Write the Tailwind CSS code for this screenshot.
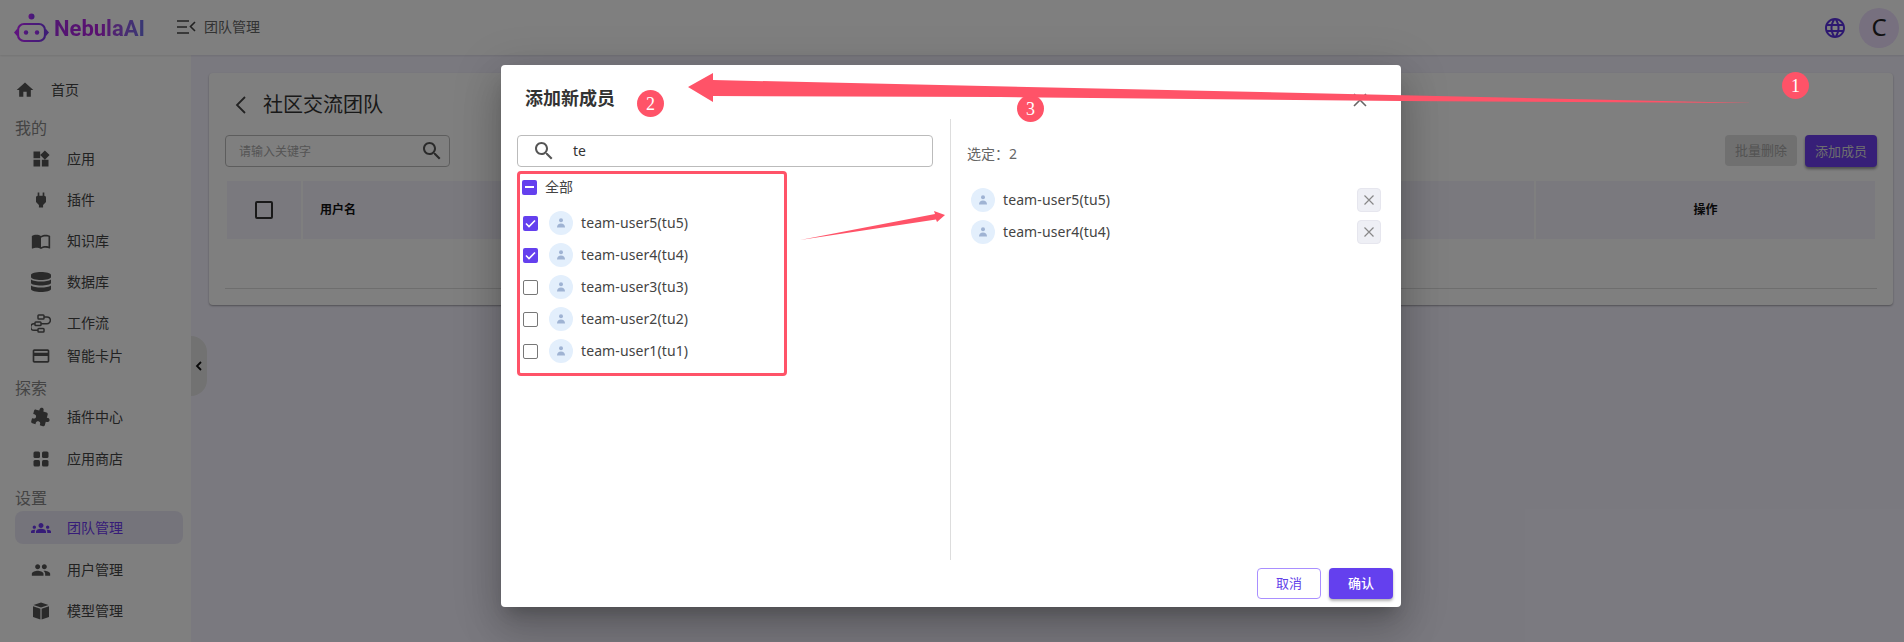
<!DOCTYPE html>
<html lang="zh-CN">
<head>
  <meta charset="UTF-8" />
  <title>团队管理</title>
  <script src="https://cdn.jsdelivr.net/npm/@tailwindcss/browser@4"></script>
</head>
<body class="h-[642px] overflow-hidden relative bg-[#f5f3ff] text-[#444] text-sm font-['Noto_Sans','Noto_Sans_CJK_SC',sans-serif]">

  <!-- page behind the dialog -->
  <header class="h-[55px] bg-white shadow-[0_1px_2px_rgba(0,0,0,0.1)] relative z-10 flex items-center">
    <div class="w-[177px] pl-[14px] flex items-center gap-[5px]">
      <svg class="w-[35px] h-[30px] mt-[1px] shrink-0" viewBox="0 0 35 30" fill="none">
        <defs><linearGradient id="logo" x1="0" x2="1" y1="0" y2="0"><stop offset="0" stop-color="#c026ff"/><stop offset="1" stop-color="#7c3aed"/></linearGradient></defs>
        <circle cx="17.5" cy="3.5" r="3" fill="url(#logo)"/>
        <path d="M17.5 6v5" stroke="url(#logo)" stroke-width="2"/>
        <rect x="4" y="11" width="27" height="17" rx="6" stroke="url(#logo)" stroke-width="2.2"/>
        <circle cx="12" cy="19.5" r="2.2" fill="url(#logo)"/>
        <circle cx="23" cy="19.5" r="2.2" fill="url(#logo)"/>
        <path d="M3 16l-3 3.5 3 3.5zM32 16l3 3.5-3 3.5z" fill="url(#logo)"/>
      </svg>
      <span class="text-[22px] leading-none font-bold mt-[2px] bg-gradient-to-r from-[#a62ce6] via-[#b41ee0] to-[#6d72e8] bg-clip-text text-transparent font-['Roboto',sans-serif]">NebulaAI</span>
    </div>
    <svg class="w-[19px] h-[14px] -mt-[2px]" viewBox="0 0 19 14" fill="none" stroke="#444" stroke-width="1.6"><path d="M0 1h12M0 7h10M0 13h12M18 2l-4.5 4.5L18 11"/></svg>
    <span class="ml-[8px] -mt-[1px] text-[#666]">团队管理</span>
    <svg class="w-6 h-6 ml-auto text-[#5a30e0]" viewBox="0 0 24 24" fill="currentColor"><path d="M11.99 2C6.47 2 2 6.48 2 12s4.47 10 9.99 10C17.52 22 22 17.52 22 12S17.52 2 11.99 2zm6.93 6h-2.95c-.32-1.25-.78-2.45-1.38-3.56 1.84.63 3.37 1.91 4.33 3.56zM12 4.04c.83 1.2 1.48 2.53 1.91 3.96h-3.82c.43-1.43 1.08-2.76 1.91-3.96zM4.26 14C4.1 13.36 4 12.69 4 12s.1-1.36.26-2h3.38c-.08.66-.14 1.32-.14 2 0 .68.06 1.34.14 2H4.26zm.82 2h2.95c.32 1.25.78 2.45 1.38 3.56-1.84-.63-3.37-1.9-4.33-3.56zm2.95-8H5.08c.96-1.66 2.49-2.93 4.33-3.56C8.81 5.55 8.35 6.75 8.03 8zM12 19.96c-.83-1.2-1.48-2.53-1.91-3.96h3.82c-.43 1.43-1.08 2.76-1.91 3.96zM14.34 14H9.66c-.09-.66-.16-1.32-.16-2 0-.68.07-1.35.16-2h4.68c.09.65.16 1.32.16 2 0 .68-.07 1.34-.16 2zm.25 5.56c.6-1.11 1.06-2.31 1.38-3.56h2.95c-.96 1.65-2.49 2.93-4.33 3.56zM16.36 14c.08-.66.14-1.32.14-2 0-.68-.06-1.34-.14-2h3.38c.16.64.26 1.31.26 2s-.1 1.36-.26 2h-3.38z"/></svg>
    <div class="w-10 h-10 ml-[12px] mr-[5px] rounded-full bg-[#eee0ff] flex items-center justify-center text-[24px] text-[#222]">C</div>
  </header>

  <div class="flex h-[587px]">
    <!-- sidebar -->
    <aside class="w-[191px] shrink-0 bg-white pt-[14px] relative">
      <a class="flex items-center h-[41px] pl-[15px] gap-[16px]">
        <svg class="w-5 h-5 fill-[#555]" viewBox="0 0 24 24"><path d="M10 20v-6h4v6h5v-8h3L12 3 2 12h3v8z"/></svg>
        <span>首页</span>
      </a>
      <p class="h-[24px] mt-[6px] pl-[15px] text-base leading-[24px] text-[#888]">我的</p>
      <a class="flex items-center h-[41px] pl-[31px] gap-[16px] -mt-[2px]">
        <svg class="w-5 h-5 fill-[#555]" viewBox="0 0 24 24"><path d="M13 13v8h8v-8h-8zM3 21h8v-8H3v8zM3 3v8h8V3H3zm13.66-1.31L11 7.34 16.66 13l5.66-5.66-5.66-5.65z"/></svg>
        <span>应用</span>
      </a>
      <a class="flex items-center h-[41px] pl-[31px] gap-[16px]">
        <svg class="w-5 h-5 fill-[#555]" viewBox="0 0 24 24"><path d="M16 7V3h-2v4h-4V3H8v4h-.01C6.9 7 6 7.9 6 8.99v5.49L9.5 18v3h5v-3l3.5-3.51v-5.5c0-1.1-.9-1.99-2-1.99z"/></svg>
        <span>插件</span>
      </a>
      <a class="flex items-center h-[41px] pl-[31px] gap-[16px]">
        <svg class="w-5 h-5 fill-[#555]" viewBox="0 0 24 24"><path d="M21 5c-1.11-.35-2.33-.5-3.5-.5-1.95 0-4.05.4-5.5 1.5-1.45-1.1-3.55-1.5-5.5-1.5S2.45 4.9 1 6v14.65c0 .25.25.5.5.5.1 0 .15-.05.25-.05C3.1 20.45 5.05 20 6.5 20c1.95 0 4.05.4 5.5 1.5 1.35-.85 3.8-1.5 5.5-1.5 1.65 0 3.35.3 4.75 1.05.1.05.15.05.25.05.25 0 .5-.25.5-.5V6c-.6-.45-1.25-.75-2-1zm0 13.5c-1.1-.35-2.3-.5-3.5-.5-1.7 0-4.15.65-5.5 1.5V8c1.35-.85 3.8-1.5 5.5-1.5 1.2 0 2.4.15 3.5.5v11.5z"/></svg>
        <span>知识库</span>
      </a>
      <a class="flex items-center h-[41px] pl-[31px] gap-[16px]">
        <svg class="w-5 h-5 fill-[#555]" viewBox="0 0 20 20"><path d="M10 0c5 0 10 1 10 3v2c0 2-5 3-10 3S0 7 0 5V3c0-2 5-3 10-3zM0 7.5C2 9 6 9.6 10 9.6S18 9 20 7.5V11c0 1.5-5 2.5-10 2.5S0 12.5 0 11zM0 13.5c2 1.5 6 2.1 10 2.1s8-.6 10-2.100V17c0 2-5 3-10 3S0 19 0 17z"/></svg>
        <span>数据库</span>
      </a>
      <a class="flex items-center h-[41px] pl-[31px] gap-[16px]">
        <svg class="w-5 h-5" viewBox="0 0 20 20" fill="none" stroke="#555" stroke-width="1.5"><rect x="7" y="2" width="6" height="4" rx=".8"/><rect x="4" y="9" width="6" height="3.5" rx=".8"/><rect x="7" y="15.5" width="6" height="3.5" rx=".8"/><path d="M13 4h3a2.700 2.700 0 0 1 0 6.700h-6M4 10.700H3a3.300 3.300 0 0 0 0 6.600h4"/></svg>
        <span>工作流</span>
      </a>
      <a class="flex items-center h-[27px] pl-[31px] gap-[16px] -mt-[1px] mb-[3px]">
        <svg class="w-5 h-5 fill-[#555]" viewBox="0 0 24 24"><path d="M20 4H4c-1.110 0-1.990.89-1.990 2L2 18c0 1.110.89 2 2 2h16c1.110 0 2-.89 2-2V6c0-1.110-.89-2-2-2zm0 14H4v-6h16v6zm0-10H4V6h16v2z"/></svg>
        <span>智能卡片</span>
      </a>
      <p class="h-[24px] mt-[7px] pl-[15px] text-base leading-[24px] text-[#888]">探索</p>
      <a class="flex items-center h-[41px] pl-[31px] gap-[16px] -mt-[4px] mb-[1px]">
        <svg class="w-5 h-5 fill-[#555] rotate-[15deg]" viewBox="0 0 24 24"><path d="M20.5 11H19V7c0-1.100-.9-2-2-2h-4V3.5C13 2.120 11.880 1 10.500 1S8 2.120 8 3.5V5H4c-1.100 0-1.990.9-1.990 2v3.800H3.500c1.490 0 2.700 1.210 2.700 2.700s-1.210 2.700-2.700 2.700H2V20c0 1.100.9 2 2 2h3.800v-1.500c0-1.490 1.210-2.700 2.700-2.700 1.490 0 2.700 1.210 2.700 2.700V22H17c1.100 0 2-.9 2-2v-4h1.500c1.380 0 2.500-1.120 2.500-2.500S21.880 11 20.500 11z"/></svg>
        <span>插件中心</span>
      </a>
      <a class="flex items-center h-[41px] pl-[31px] gap-[16px]">
        <svg class="w-5 h-5 fill-[#555]" viewBox="0 0 20 20"><rect x="2.500" y="2.500" width="6.500" height="6.500" rx="1.500"/><rect x="11" y="2.500" width="6.500" height="6.500" rx="1.500"/><rect x="2.500" y="11" width="6.500" height="6.500" rx="1.500"/><rect x="11" y="11" width="6.500" height="6.500" rx="1.500"/></svg>
        <span>应用商店</span>
      </a>
      <p class="h-[24px] pl-[15px] text-base leading-[24px] text-[#888] mt-[7px]">设置</p>
      <a class="flex items-center h-[33px] ml-[15px] mr-[8px] pl-[16px] gap-[16px] rounded-lg bg-[#ebe9f6] text-[#6d38f0] mt-[1px] mb-[5px]">
        <svg class="w-5 h-5 fill-[#6d38f0]" viewBox="0 0 24 24"><path d="M12 12.750c1.630 0 3.070.39 4.240.9 1.080.48 1.760 1.560 1.760 2.730V18H6v-1.610c0-1.180.68-2.260 1.760-2.730 1.170-.52 2.610-.91 4.240-.91zM4 13c1.100 0 2-.9 2-2s-.9-2-2-2-2 .9-2 2 .9 2 2 2zm1.130 1.100c-.37-.06-.74-.1-1.130-.1-.99 0-1.930.21-2.780.58C.48 14.900 0 15.620 0 16.430V18h4.500v-1.610c0-.83.23-1.610.63-2.290zM20 13c1.100 0 2-.9 2-2s-.9-2-2-2-2 .9-2 2 .9 2 2 2zm4 3.430c0-.81-.48-1.530-1.220-1.850-.85-.37-1.790-.58-2.780-.58-.39 0-.76.04-1.130.1.4.68.63 1.460.63 2.290V18H24v-1.570zM12 6c1.660 0 3 1.340 3 3s-1.340 3-3 3-3-1.340-3-3 1.340-3 3-3z"/></svg>
        <span>团队管理</span>
      </a>
      <a class="flex items-center h-[41px] pl-[31px] gap-[16px]">
        <svg class="w-5 h-5 fill-[#555]" viewBox="0 0 24 24"><path d="M16 11c1.660 0 2.990-1.340 2.990-3S17.660 5 16 5c-1.660 0-3 1.340-3 3s1.340 3 3 3zm-8 0c1.660 0 2.990-1.340 2.990-3S9.660 5 8 5C6.340 5 5 6.340 5 8s1.340 3 3 3zm0 2c-2.330 0-7 1.170-7 3.500V19h14v-2.500c0-2.330-4.670-3.500-7-3.500zm8 0c-.29 0-.62.02-.97.05 1.160.84 1.970 1.970 1.970 3.450V19h6v-2.500c0-2.330-4.670-3.500-7-3.500z"/></svg>
        <span>用户管理</span>
      </a>
      <a class="flex items-center h-[41px] pl-[31px] gap-[16px]">
        <svg class="w-5 h-5 fill-[#555]" viewBox="0 0 20 20"><path d="M10 1.500l7.500 2.600-7.500 2.500-7.500-2.500zM2 5.200l7.400 2.500V18.500L2 16zM18 5.200l-7.400 2.500V18.500L18 16z"/></svg>
        <span>模型管理</span>
      </a>
      <div class="absolute left-full top-[281px] w-4 h-[60px] rounded-r-[16px] bg-[#e4e4e4] flex items-center justify-center">
        <svg class="w-3 h-3" viewBox="0 0 12 12" fill="none" stroke="#111" stroke-width="1.800"><path d="M8 2L4 6l4 4"/></svg>
      </div>
    </aside>

    <!-- team card -->
    <main class="flex-1 pt-[18px] pl-[18px] pr-[11px]">
      <section class="h-[232px] bg-white rounded shadow-[0_1px_2px_rgba(0,0,0,0.35)] px-4">
        <div class="flex items-center h-[62px] pt-[2px] pl-[10px]">
          <svg class="w-[11px] h-[18px]" viewBox="0 0 11 18" fill="none" stroke="#444" stroke-width="1.800"><path d="M10 1L2 9l8 8"/></svg>
          <h1 class="ml-[17px] text-[20px] text-[#333]">社区交流团队</h1>
        </div>
        <div class="flex items-start">
          <div class="w-[225px] h-[32px] border border-[#bbb] rounded flex items-center pl-[13px] pr-[5px]">
            <span class="text-xs text-[#aaa] mt-[1px]">请输入关键字</span>
            <svg class="w-6 h-6 ml-auto fill-[#555]" viewBox="0 0 24 24"><path d="M15.500 14h-.79l-.28-.27C15.410 12.590 16 11.110 16 9.500 16 5.910 13.090 3 9.500 3S3 5.910 3 9.500 5.910 16 9.500 16c1.610 0 3.090-.59 4.230-1.570l.27.28v.79l5 4.990L20.490 19l-4.990-5zm-6 0C7.010 14 5 11.990 5 9.500S7.010 5 9.500 5 14 7.010 14 9.500 11.990 14 9.500 14z"/></svg>
          </div>
          <button class="ml-auto w-[72px] h-[31px] rounded bg-[#e0e0e0] text-[#a6a6a6] text-[13px]">批量删除</button>
          <button class="ml-[8px] w-[72px] h-[32px] rounded bg-[#6e3ff0] text-[#ddd] text-[13px] shadow-[0_2px_3px_rgba(0,0,0,0.4)]">添加成员</button>
        </div>
        <div class="mt-[14px] ml-[2px] mr-[2px] flex gap-[2px] h-[58px] text-xs font-bold text-[#111]">
          <div class="w-[74px] bg-[#f4f2fd] flex items-center justify-center">
            <span class="w-[18px] h-[18px] border-2 border-[#333] rounded-[2px]"></span>
          </div>
          <div class="flex-1 bg-[#f4f2fd] flex items-center pl-[17px]">用户名</div>
          <div class="w-[339px] bg-[#f4f2fd] flex items-center justify-center">操作</div>
        </div>
        <div class="mt-[49px] h-px bg-[#ddd]"></div>
      </section>
    </main>
  </div>

  <!-- dim layer -->
  <div class="absolute inset-0 bg-black/50 z-20"></div>

  <!-- dialog -->
  <div class="absolute z-30 left-[501px] top-[65px] w-[900px] h-[542px] bg-white rounded shadow-[0_11px_15px_-7px_rgba(0,0,0,0.2),0_24px_38px_3px_rgba(0,0,0,0.14),0_9px_46px_8px_rgba(0,0,0,0.12)] flex flex-col">
    <div class="flex items-center h-[54px] pl-[24px] pr-[34px]">
      <h2 class="text-lg font-bold text-[#333] mt-[12px]">添加新成员</h2>
      <svg class="w-[14px] h-[14px] ml-auto mt-[16px]" viewBox="0 0 14 14" fill="none" stroke="#666" stroke-width="1.600"><path d="M1 1l12 12M13 1L1 13"/></svg>
    </div>
    <div class="flex h-[441px]">
      <div class="w-[449px] pl-[16px] pr-[17px]">
        <div class="h-[32px] mt-[16px] border border-[#bbb] rounded flex items-center pl-[14px] text-[#333]">
          <svg class="w-6 h-6 fill-[#555]" viewBox="0 0 24 24"><path d="M15.500 14h-.79l-.28-.27C15.410 12.590 16 11.110 16 9.500 16 5.910 13.090 3 9.500 3S3 5.910 3 9.500 5.910 16 9.500 16c1.610 0 3.090-.59 4.230-1.570l.27.28v.79l5 4.990L20.490 19l-4.990-5zm-6 0C7.010 14 5 11.990 5 9.500S7.010 5 9.500 5 14 7.010 14 9.500 11.990 14 9.500 14z"/></svg>
          <span class="ml-[17px]">te</span>
        </div>
        <div class="mt-[4px] w-[270px] h-[205px] border-[3px] border-[#ff5368] rounded px-[2px]">
          <div class="flex items-center h-[26px] text-[#444]">
            <span class="w-[15px] h-[15px] rounded-[2px] bg-[#6440ee] flex items-center justify-center"><span class="w-[9px] h-[2px] bg-white"></span></span>
            <span class="ml-[8px]">全部</span>
          </div>
          <ul class="mt-[7px] pl-[1px] text-[#444] tracking-[0.1px]">
            <li class="flex items-center h-[32px]">
              <span class="w-[15px] h-[15px] rounded-[2px] bg-[#6440ee] flex items-center justify-center"><svg class="w-[11px] h-[11px]" viewBox="0 0 11 11" fill="none" stroke="white" stroke-width="1.600"><path d="M1 5.500l3 3 6-6"/></svg></span>
              <span class="ml-[11px] w-6 h-6 rounded-full bg-[#e3effc] flex items-center justify-center"><svg class="w-3 h-3 fill-[#9fb3d3]" viewBox="0 0 12 12"><circle cx="6" cy="3.200" r="2"/><path d="M2 10.500c0-2.600 1.700-4 4-4s4 1.400 4 4z"/></svg></span>
              <span class="ml-2">team-user5(tu5)</span>
            </li>
            <li class="flex items-center h-[32px]">
              <span class="w-[15px] h-[15px] rounded-[2px] bg-[#6440ee] flex items-center justify-center"><svg class="w-[11px] h-[11px]" viewBox="0 0 11 11" fill="none" stroke="white" stroke-width="1.600"><path d="M1 5.500l3 3 6-6"/></svg></span>
              <span class="ml-[11px] w-6 h-6 rounded-full bg-[#e3effc] flex items-center justify-center"><svg class="w-3 h-3 fill-[#9fb3d3]" viewBox="0 0 12 12"><circle cx="6" cy="3.200" r="2"/><path d="M2 10.500c0-2.600 1.700-4 4-4s4 1.400 4 4z"/></svg></span>
              <span class="ml-2">team-user4(tu4)</span>
            </li>
            <li class="flex items-center h-[32px]">
              <span class="w-[15px] h-[15px] rounded-[2px] border-[1.500px] border-[#777]"></span>
              <span class="ml-[11px] w-6 h-6 rounded-full bg-[#e3effc] flex items-center justify-center"><svg class="w-3 h-3 fill-[#9fb3d3]" viewBox="0 0 12 12"><circle cx="6" cy="3.200" r="2"/><path d="M2 10.500c0-2.600 1.700-4 4-4s4 1.400 4 4z"/></svg></span>
              <span class="ml-2">team-user3(tu3)</span>
            </li>
            <li class="flex items-center h-[32px]">
              <span class="w-[15px] h-[15px] rounded-[2px] border-[1.500px] border-[#777]"></span>
              <span class="ml-[11px] w-6 h-6 rounded-full bg-[#e3effc] flex items-center justify-center"><svg class="w-3 h-3 fill-[#9fb3d3]" viewBox="0 0 12 12"><circle cx="6" cy="3.200" r="2"/><path d="M2 10.500c0-2.600 1.700-4 4-4s4 1.400 4 4z"/></svg></span>
              <span class="ml-2">team-user2(tu2)</span>
            </li>
            <li class="flex items-center h-[32px]">
              <span class="w-[15px] h-[15px] rounded-[2px] border-[1.500px] border-[#777]"></span>
              <span class="ml-[11px] w-6 h-6 rounded-full bg-[#e3effc] flex items-center justify-center"><svg class="w-3 h-3 fill-[#9fb3d3]" viewBox="0 0 12 12"><circle cx="6" cy="3.200" r="2"/><path d="M2 10.500c0-2.600 1.700-4 4-4s4 1.400 4 4z"/></svg></span>
              <span class="ml-2">team-user1(tu1)</span>
            </li>
          </ul>
        </div>
      </div>
      <div class="flex-1 border-l border-[#ddd] pl-[16px] pr-[20px]">
        <p class="mt-[25px] text-[#666]">选定：2</p>
        <ul class="mt-[20px] text-[#444] tracking-[0.1px]">
          <li class="flex items-center h-[32px] pl-[4px]">
            <span class="w-6 h-6 rounded-full bg-[#e3effc] flex items-center justify-center"><svg class="w-3 h-3 fill-[#9fb3d3]" viewBox="0 0 12 12"><circle cx="6" cy="3.200" r="2"/><path d="M2 10.500c0-2.600 1.700-4 4-4s4 1.400 4 4z"/></svg></span>
            <span class="ml-2">team-user5(tu5)</span>
            <span class="ml-auto w-6 h-6 rounded bg-[#eeeff5] border border-[#e6e6ee] flex items-center justify-center"><svg class="w-[10px] h-[10px]" viewBox="0 0 10 10" fill="none" stroke="#888" stroke-width="1.200"><path d="M.5.500l9 9M9.500.500l-9 9"/></svg></span>
          </li>
          <li class="flex items-center h-[32px] pl-[4px]">
            <span class="w-6 h-6 rounded-full bg-[#e3effc] flex items-center justify-center"><svg class="w-3 h-3 fill-[#9fb3d3]" viewBox="0 0 12 12"><circle cx="6" cy="3.200" r="2"/><path d="M2 10.500c0-2.600 1.700-4 4-4s4 1.400 4 4z"/></svg></span>
            <span class="ml-2">team-user4(tu4)</span>
            <span class="ml-auto w-6 h-6 rounded bg-[#eeeff5] border border-[#e6e6ee] flex items-center justify-center"><svg class="w-[10px] h-[10px]" viewBox="0 0 10 10" fill="none" stroke="#888" stroke-width="1.200"><path d="M.5.500l9 9M9.500.500l-9 9"/></svg></span>
          </li>
        </ul>
      </div>
    </div>
    <div class="flex justify-end gap-2 pr-[8px] pt-[8px] text-[13px]">
      <button class="w-[64px] h-[31px] rounded border border-[#a98fff] text-[#6240e8]">取消</button>
      <button class="w-[64px] h-[31px] rounded bg-[#6440ee] text-white font-medium shadow-[0_2px_3px_rgba(0,0,0,0.3)]">确认</button>
    </div>
  </div>

  <!-- screenshot annotations -->
  <span class="absolute z-40 left-[1782px] top-[72px] w-[27px] h-[27px] rounded-full bg-[#ff5368] text-white flex items-center justify-center text-lg font-['Liberation_Serif',serif]">1</span>
  <span class="absolute z-40 left-[637px] top-[90px] w-[27px] h-[27px] rounded-full bg-[#ff5368] text-white flex items-center justify-center text-lg font-['Liberation_Serif',serif]">2</span>
  <span class="absolute z-40 left-[1017px] top-[95px] w-[27px] h-[27px] rounded-full bg-[#ff5368] text-white flex items-center justify-center text-lg font-['Liberation_Serif',serif]">3</span>
  <svg class="absolute z-40 left-0 top-0 w-[1904px] h-[642px] pointer-events-none" viewBox="0 0 1904 642" fill="#ff5368">
    <path d="M688 87L713 73V80L1755 103L1400 101L1000 97L713 96V102Z"/>
    <path d="M800 240L935 214L934 211L945 215L937 222L936 219.5Z"/>
  </svg>
</body>
</html>
